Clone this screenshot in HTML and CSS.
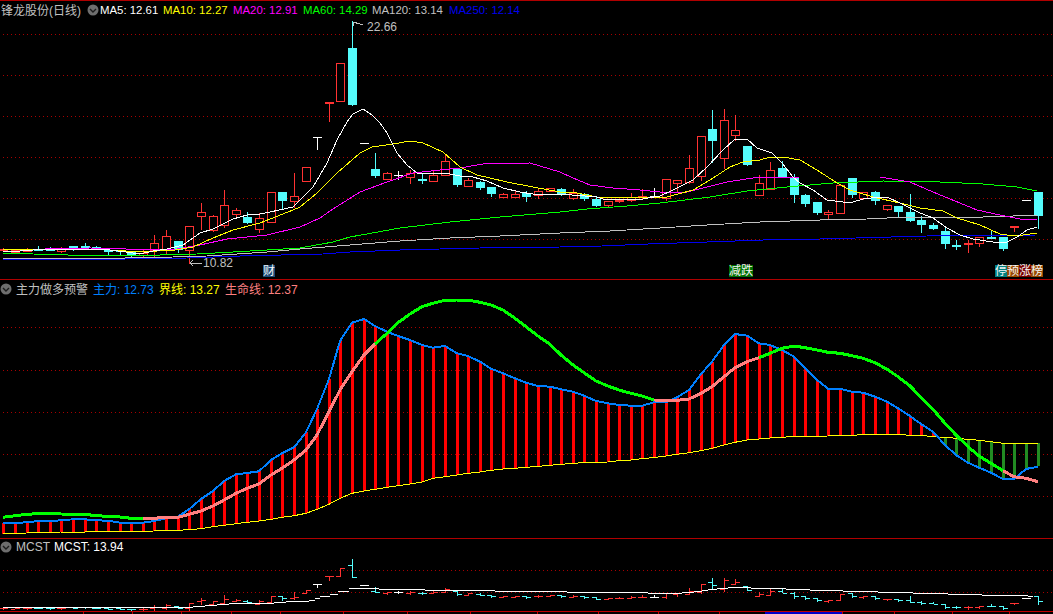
FILE: index.html
```html
<!DOCTYPE html>
<html lang="zh-CN">
<head>
<meta charset="utf-8">
<title>锋龙股份(日线)</title>
<link rel="stylesheet" href="styles.css">
</head>
<body>
<main class="terminal">
  <section class="pane pane-price">
    <svg id="price" class="plot" viewBox="0 1 1053 278" width="1053" height="278"></svg>
    <header class="legend">
      <span class="title">锋龙股份(日线)</span>
      <svg class="toggle" viewBox="0 0 12 12" width="12" height="12"><circle cx="6" cy="6" r="5.5"/><path d="M3 5l3 3 3-3"/></svg>
      <span class="val white ma5">MA5: 12.61</span>
      <span class="val yellow ma10">MA10: 12.27</span>
      <span class="val magenta ma20">MA20: 12.91</span>
      <span class="val green ma60">MA60: 14.29</span>
      <span class="val grey ma120">MA120: 13.14</span>
      <span class="val blue">MA250: 12.14</span>
    </header>
    <span class="pin pin-high">22.66</span>
    <span class="pin pin-low">10.82</span>
    <span class="badge badge-cai"><b class="b-navy">财</b></span>
    <span class="badge badge-jian"><b class="b-green">减</b><b class="b-green">跌</b></span>
    <span class="badge badge-ting"><b class="b-teal">停</b><b class="b-brown">预</b><b class="b-maroon">涨</b><b class="b-brown">榜</b></span>
  </section>
  <section class="pane pane-main">
    <svg id="force" class="plot" viewBox="0 280 1053 258" width="1053" height="258"></svg>
    <header class="legend legend-low">
      <svg class="toggle" viewBox="0 0 12 12" width="12" height="12"><circle cx="6" cy="6" r="5.5"/><path d="M3 5l3 3 3-3"/></svg>
      <span class="title name-force">主力做多预警</span>
      <span class="val sky w60">主力: 12.73</span>
      <span class="val yellow w60">界线: 13.27</span>
      <span class="val pink">生命线: 12.37</span>
    </header>
  </section>
  <section class="pane pane-mcst">
    <svg id="mcst" class="plot" viewBox="0 539 1053 75" width="1053" height="75"></svg>
    <header class="legend legend-low">
      <svg class="toggle" viewBox="0 0 12 12" width="12" height="12"><circle cx="6" cy="6" r="5.5"/><path d="M3 5l3 3 3-3"/></svg>
      <span class="title name-mcst">MCST</span>
      <span class="val white">MCST: 13.94</span>
    </header>
  </section>
</main>
<script src="app.js"></script>
</body>
</html>
```
FILE: styles.css
```css
html, body {
  margin: 0;
  background: #000;
}
body {
  width: 1053px;
  height: 614px;
  overflow: hidden;
  font-family: "Liberation Sans", "Noto Sans CJK SC", sans-serif;
  font-size: 12px;
  color: #c0c0c0;
}
.terminal {
  display: flex;
  flex-direction: column;
}
.pane {
  position: relative;
  border-top: 1px solid #b00000;
}
.plot {
  display: block;
  shape-rendering: crispEdges;
}
.plot .trace { fill: none; }
.legend {
  position: absolute;
  top: 0;
  left: 1px;
  display: flex;
  align-items: center;
  height: 17px;
  white-space: nowrap;
}
.legend-low { left: 0; }
.pane-mcst .legend { top: -1px; }
.title { color: #c0c0c0; }
.toggle { margin: 0 1px 0 6px; flex: none; }
.toggle circle { fill: #6e6e6e; }
.toggle path { fill: none; stroke: #1c1c1c; stroke-width: 1.4; }
.legend-low .toggle { margin: 0 4px 0 0; }
.val { margin-right: 6px; flex: none; }
.pane-price .val { font-size: 11.4px; }
.ma5 { width: 57px; }
.ma10 { width: 64px; }
.ma20 { width: 64px; }
.ma60 { width: 63px; }
.ma120 { width: 71px; }
.w60 { width: 60px; }
.name-force { margin-right: 5px; }
.name-mcst { margin-right: 4px; }
.white { color: #fff; }
.yellow { color: #ff0; }
.magenta { color: #f0f; }
.green { color: #0f0; }
.grey { color: #c0c0c0; }
.blue { color: #0000f0; }
.sky { color: #0080ff; }
.pink { color: #ff8080; }
.pin {
  position: absolute;
  line-height: 14px;
  color: #c0c0c0;
}
.pin-high { left: 367px; top: 19px; }
.pin-low { left: 203px; top: 255px; }
.badge {
  position: absolute;
  top: 264px;
  display: flex;
  height: 12px;
  line-height: 12px;
  color: #f4f4f4;
}
.badge b { width: 12px; font-weight: 400; text-align: center; }
.badge-cai { left: 263px; }
.badge-jian { left: 729px; }
.badge-ting { left: 995px; }
.b-navy { background: #1a4a78; }
.b-green { background: #007000; }
.b-teal { background: #008080; }
.b-brown { background: #9a4a00; }
.b-maroon { background: #7a0000; }
```
FILE: app.js
```js
const NS = 'http://www.w3.org/2000/svg';
const RED = '#ff3232', CYAN = '#54fcfc', WHITE = '#ffffff', GRID = '#a80000';
const bx = i => Math.round(3.4 + 11.62 * i);

function add(svg, tag, attrs) {
  const n = document.createElementNS(NS, tag);
  for (const k in attrs) n.setAttribute(k, attrs[k]);
  svg.appendChild(n);
  return n;
}
const rect = (s, x, y, w, h, fill) =>
  add(s, 'rect', { x, y: Math.round(y), width: w, height: Math.max(1, Math.round(h)), fill });
const trace = (s, pts, color, w) =>
  add(s, 'polyline', { class: 'trace', points: pts.map(p => p.join(',')).join(' '), stroke: color, 'stroke-width': w });
const grid = (s, ys) => ys.forEach(y =>
  add(s, 'line', { x1: 3, x2: 1053, y1: y + .5, y2: y + .5, stroke: GRID, 'stroke-dasharray': '1 3' }));

/* high, body top, body bottom, low, kind */
const K = [
 [248,249,250,251,'r'],[250,250,252,252,'r'],[248,248.5,250,251,'r'],[246,248.5,250,250,'c'],[247,249,249,250,'c'],
 [247,248.5,250,252,'r'],[246,246,248,250,'c'],[243,246,246,248,'c'],[246,247,249,249,'c'],[250,250,251,255,'c'],
 [250,250,251,255,'c'],[252,252,255,257,'c'],[249,253,255,258,'r'],[235,243,250,257,'r'],[230,236,249,254,'r'],
 [241,241,250,252,'c'],[226,226,250,263,'r'],[203,212,216,229,'r'],[215,216,230,231,'r'],[190,205,225,227,'r'],
 [208,210,214,218,'r'],[212,217,223,223,'c'],[213,218,229,232,'r'],[192,192,222,222,'r'],[192,192,201,209,'c'],
 [173,196,201,207,'r'],[167,167,181,181,'r'],[137,137,137,149,'w'],[102,102,102,121,'t'],[63,63,101,101,'r'],
 [21,48,105,105,'c'],[143,143,143,143,'w'],[153,169,176,177,'c'],[172,173,179,179,'r'],[171,175,175,179,'w'],
 [170,173,177,183,'r'],[174,179,179,183,'c'],[171,175,181,181,'r'],[155,161,175,175,'r'],[169,169,185,186,'c'],
 [178,180,186,186,'r'],[181,182,188,189,'c'],[187,187,194,196,'c'],[193,194,197,197,'r'],[191,194,197,197,'r'],
 [191,193,197,201,'c'],[188,191,195,198,'r'],[188,188,191,191,'r'],[188,189,195,195,'c'],[189,193,198,199,'r'],
 [193,194,199,200,'c'],[196,199,206,206,'c'],[201,201,205,207,'r'],[199,200,201,202,'r'],[193,197,200,201,'r'],
 [189,196,197,198,'r'],[188,196,196,197,'w'],[179,179,198,200,'r'],[180,180,183,192,'r'],[155,168,182,183,'r'],
 [136,136,176,180,'r'],[110,129,141,162,'c'],[109,120,158,168,'r'],[115,130,135,140,'r'],[146,146,165,165,'c'],
 [175,183,195,195,'r'],[162,170,189,189,'r'],[161,168,177,177,'c'],[174,177,195,202,'c'],[194,195,204,206,'c'],
 [202,202,213,214,'c'],[210,212,214,218,'r'],[185,185,213,213,'r'],[178,178,195,197,'c'],[192,192,198,199,'r'],
 [191,192,201,204,'c'],[205,205,209,210,'r'],[206,206,212,217,'c'],[194,212,221,221,'c'],[216,220,225,232,'c'],
 [223,225,229,229,'c'],[228,231,244,248,'c'],[240,245,246,249,'c'],[240,243,245,252,'t'],[237,237,243,246,'r'],
 [231,237,238,238,'c'],[237,237,249,250,'c'],[226,226,226,231,'t'],[200,200,200,200,'w'],[192,192,216,228,'c']
];
const colorOf = k => (k === 'c' ? CYAN : k === 'w' ? WHITE : RED);

const MA5 = [[3,251],[20,251],[33,250],[60,249],[90,249],[110,250],[126,252],[140,254],[153,251],[167,249],[183,245],[200,233],[213,229],[233,219],[247,215],[260,214],[270,212],[293,207],[300,200],[313,187],[327,163],[337,140],[347,122],[353,114],[363,109],[372,115],[380,123],[387,133],[397,153],[407,165],[417,173],[433,174],[445,173],[460,176],[473,177],[487,181],[503,188],[520,192],[533,194],[560,194],[597,197],[603,199],[637,200],[660,196],[673,190],[693,180],[707,167],[723,150],[735,139],[747,139],[757,148],[772,153],[782,163],[793,177],[800,183],[813,190],[827,200],[843,202],[853,202],[863,199],[880,197],[887,197],[900,203],[920,213],[933,218],[947,228],[960,235],[973,239],[993,242],[1007,242],[1017,237],[1027,230],[1037,227]];
const MA10 = [[3,249],[33,250],[45,249],[55,250],[80,249],[110,250],[126,251],[140,252],[175,250],[193,247],[213,238],[233,230],[260,223],[293,210],[300,207],[317,193],[337,173],[360,153],[372,147],[393,144],[410,141],[423,143],[443,152],[460,167],[477,175],[507,182],[533,187],[560,192],[577,193],[597,197],[637,197],[667,197],[693,190],[710,180],[730,167],[743,162],[760,160],[770,157],[783,157],[800,160],[817,170],[837,183],[850,190],[873,197],[900,203],[920,208],[943,211],[957,218],[980,225],[1000,234],[1013,236],[1023,235],[1037,233]];
const MA20 = [[3,252],[20,251],[33,250],[45,249],[90,248],[126,249],[177,249],[200,245],[227,239],[267,235],[300,227],[320,218],[333,209],[360,192],[387,182],[413,173],[440,170],[460,168],[483,164],[530,163],[560,172],[573,178],[590,185],[613,188],[640,190],[660,192],[687,192],[707,187],[727,182],[753,178],[800,177],[880,177],[910,182],[933,192],[977,210],[1000,215],[1020,219],[1037,220]];
const MA60 = [[3,253],[33,254],[68,255],[160,255],[197,254],[233,252],[267,250],[300,248],[333,242],[350,237],[400,228],[450,222],[500,217],[560,212],[587,209],[627,206],[660,203],[710,197],[747,191],[787,187],[833,183],[883,181],[940,182],[983,184],[1017,187],[1037,191]];
const MA120 = [[3,258],[125,258],[173,257],[207,256],[267,252],[300,249],[350,245],[400,241],[450,238],[500,236],[560,233],[610,231],[660,228],[707,225],[760,222],[820,220],[867,219],[907,217],[983,217],[1013,216],[1037,215]];
const MA250 = [[3,259],[125,259],[187,258],[240,256],[323,254],[350,252],[400,250],[480,248],[560,247],[602,246],[648,244],[707,242],[763,240],[820,239],[927,236],[1037,235]];

const BLUE = [522.7,523,522.3,521,521,520.3,519.3,519.3,520.3,520.7,522.7,522.7,522.7,521,518.3,516.7,509.3,499,491,481,474.3,473,471.3,460,453.3,447.3,432.3,409,379,341,322.7,319,326,331.7,336,340,345,347.7,346,353.3,356,361.7,368.7,373.3,378.3,382.7,386,386.7,389.3,391.7,395.7,401,403.3,405,405.7,405.7,402.3,402.3,397.3,390,374,361.7,345,334,335.7,343.3,345,350,356.7,367.7,380,388.7,388.7,391.7,392.7,396.7,401.7,408.3,416,424,431.7,445,455,462.7,467.7,472.7,479,479,469,466.7];
const YEL = [533.3,533.3,533,532.7,532.3,532,532,532,531.7,531.3,531.3,531.3,531.3,531,530.3,530.3,529.7,528.7,526.7,525.3,523.7,522.3,521,519.3,517.3,515.7,513.3,509.3,504.3,498.3,493.3,491,489.3,487.3,485.7,484,482,478.3,476.7,475,473.3,472,470.3,469,468.3,467.3,466.3,465.3,464.3,463.3,462.7,462.3,462,460.7,460,458.7,457.5,456,454.3,452.7,450.7,448.3,445,442.3,440,439,438,437.3,436.3,436.3,436.3,436,435.3,435.3,434.7,434.3,434.3,434.3,435.3,435.3,436.7,437.3,438.3,439.3,440.3,441.7,443.3,443.3,443.3,443.3];
const LIFE = [517.3,515.7,514.3,513.7,513.3,514,514.3,514.3,515.7,516.3,517,518.3,518.7,518.3,517.3,517.3,514.3,511,506,500,493.3,488.3,484,475,468.3,460,450,435,411.7,390,371.7,355,344,333.3,322.7,314,306.7,303.3,300.3,300,300,302.3,305,310,318.3,326.7,336,344.3,355,365,372.7,381,386,390,393.3,396,400,400.3,400.3,399,393.3,386.7,376.7,367.7,361.7,357.7,353.3,348.3,346,347.7,350,352.3,353.3,355.7,358.3,362.7,369.3,376.7,386,397.3,409.3,423.3,435,446.7,456,463.3,470.7,476.7,478.3,481.7];
const LIFE_SEG = [[0,12,'#00ff00'],[12,32,'#ff8080'],[32,56,'#00ff00'],[56,65,'#ff8080'],[65,86,'#00ff00'],[86,89,'#ff8080']];

const STEPS = [[3,193,607],[193,205,606],[205,217,605],[217,229,604],[229,274,603],[274,286,602],[286,309,601],[309,315,600],[315,320,598],[320,330,596],[330,338,594],[338,349,591],[349,379,588],[379,425,589],[425,495,590],[495,567,591],[567,648,592],[648,682,593],[682,694,592],[694,702,591],[702,708,590],[708,717,589],[717,728,588],[728,751,587],[751,786,588],[786,810,589],[810,843,590],[843,878,591],[878,913,592],[913,948,593],[948,982,594],[982,1028,595],[1028,1033,596]];
const TICKS = [83,132,181,231,280,343,407,470,537,598,658,719,842,894,952,1009];

function drawPrice(s) {
  grid(s, [34, 75, 116, 157, 198, 239]);
  K.forEach(([h, t, b, l, kind], i) => {
    const x = bx(i), c = colorOf(kind);
    rect(s, x, h, 1, l - h + 1, c);
    if (kind === 'w' || kind === 't') {
      rect(s, x - 4, t, 9, kind === 't' ? 2 : 1, c);
    } else if (b - t < 1.5) {
      rect(s, x - 4, t, 9, 2, c);
    } else if (kind === 'c') {
      rect(s, x - 4, t, 9, b - t, c);
    } else {
      rect(s, x - 4, t, 9, b - t + 1, c);
      rect(s, x - 3, t + 1, 7, b - t - 1, '#000');
    }
  });
  trace(s, MA120, '#c0c0c0', 1);
  trace(s, MA250, '#0000f0', 1);
  trace(s, MA60, '#00ff00', 1);
  trace(s, MA20, '#ff00ff', 1);
  trace(s, MA10, '#ffff00', 1);
  trace(s, MA5, '#ffffff', 1);
  add(s, 'path', { d: 'M353 22l10 3M353 22h4M353 22v4', fill: 'none', stroke: '#c0c0c0' });
  add(s, 'path', { d: 'M190 263h12M190 263l3-3M190 263l3 3', fill: 'none', stroke: '#c0c0c0' });
}

function drawForce(s) {
  grid(s, [327, 370, 412, 454, 496]);
  BLUE.forEach((y, i) => {
    const top = Math.min(y, YEL[i]), bot = Math.max(y, YEL[i]);
    rect(s, bx(i) - 1, top, 3, bot - top, y < YEL[i] ? '#ff0000' : '#228b22');
  });
  trace(s, YEL.map((y, i) => [bx(i), y]), '#ffff00', 1);
  trace(s, BLUE.map((y, i) => [bx(i), y]), '#0080ff', 2);
  LIFE_SEG.forEach(([a, b, c]) => {
    const pts = [];
    for (let i = a; i <= b; i++) pts.push([bx(i), LIFE[i]]);
    trace(s, pts, c, 3);
  });
}

function drawMcst(s) {
  const my = y => 559 + (y - 20.7) * 0.215;
  grid(s, [570, 592]);
  K.forEach(([h, t, b, l, kind], i) => {
    const x = bx(i), c = colorOf(kind);
    const up = kind === 'r' || kind === 't';
    rect(s, x, my(h), 1, my(l) - my(h) + 1, c);
    rect(s, x - 4, my(up ? b : t), 4, 1, c);
    rect(s, x + 1, my(up ? t : b), 4, 1, c);
  });
  STEPS.forEach(([a, b, y]) => rect(s, a, y, b - a, 1, '#fff'));
  rect(s, 0, 611, 1053, 1, '#c00000');
  TICKS.forEach(x => rect(s, x, 612, 1, 2, '#c00000'));
  rect(s, 765, 612, 77, 2, '#0000c8');
}

drawPrice(document.getElementById('price'));
drawForce(document.getElementById('force'));
drawMcst(document.getElementById('mcst'));
```
